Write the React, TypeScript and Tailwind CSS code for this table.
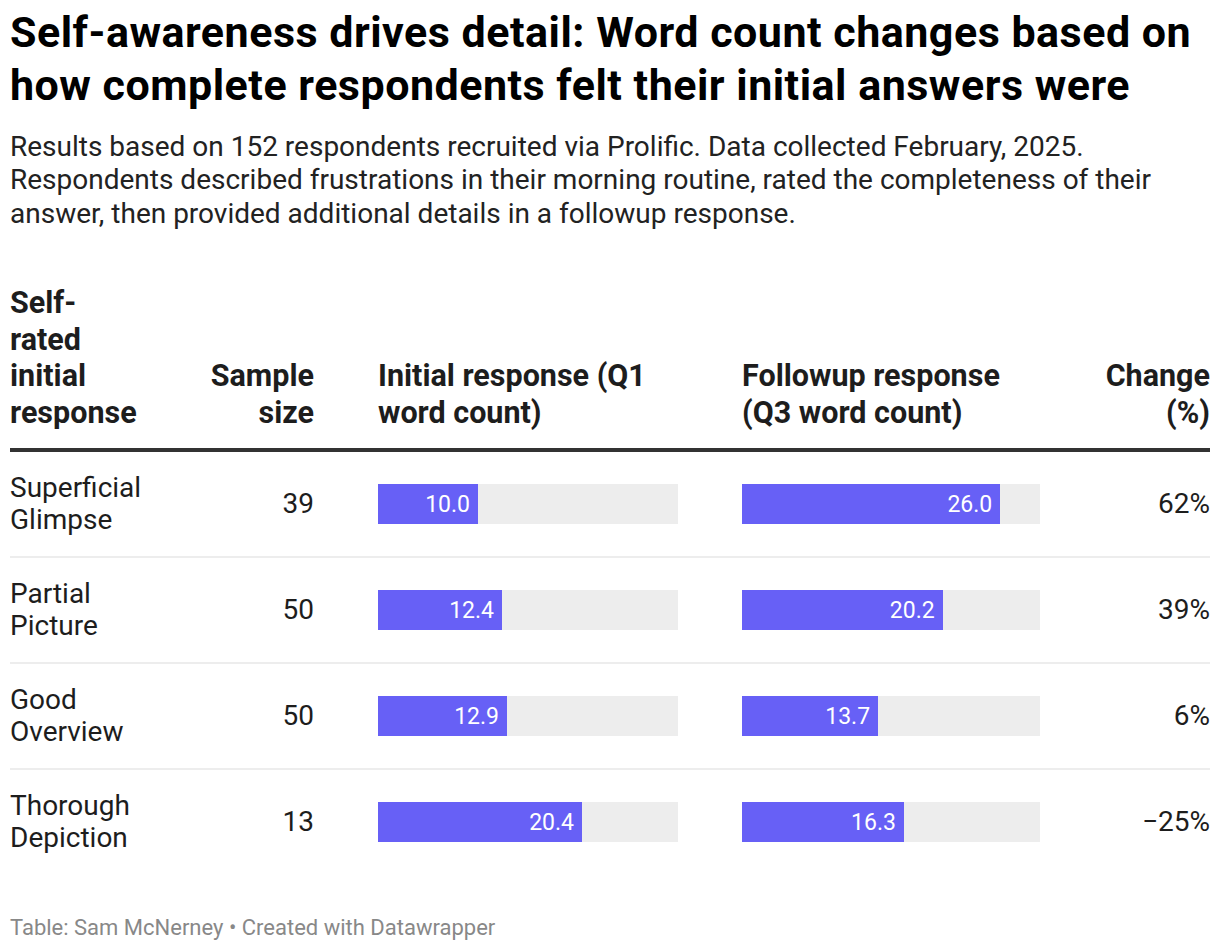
import React from 'react'

interface Row {
  label: [string, string]
  sample: number
  initial: number
  followup: number
  change: string
}

const rows: Row[] = [
  { label: ['Superficial', 'Glimpse'], sample: 39, initial: 10.0, followup: 26.0, change: '62%' },
  { label: ['Partial', 'Picture'], sample: 50, initial: 12.4, followup: 20.2, change: '39%' },
  { label: ['Good', 'Overview'], sample: 50, initial: 12.9, followup: 13.7, change: '6%' },
  { label: ['Thorough', 'Depiction'], sample: 13, initial: 20.4, followup: 16.3, change: '\u221225%' },
]

const MAX = 30

function Bar({ value, width }: { value: number; width: string }) {
  return (
    <div className={`h-[40px] bg-[#ededed] flex ${width}`}>
      <div
        className="h-full bg-[#6760f6] flex items-center justify-end pr-[8px] text-white text-[23px] leading-none"
        style={{ width: `${(value / MAX) * 100}%` }}
      >
        {value.toFixed(1)}
      </div>
    </div>
  )
}

export default function App() {
  return (
    <div
      className="w-[1220px] h-[950px] bg-white px-[10px] pt-[5.5px] text-[#1d1d1d]"
      style={{ fontFamily: 'Roboto, "Liberation Sans", sans-serif' }}
    >
      <h1 className="text-[43px] leading-[53px] font-bold text-black tracking-[0.5px]">
        Self-awareness drives detail: Word count changes based on how complete respondents felt their initial answers were
      </h1>
      <p className="mt-[18px] text-[28px] leading-[33.5px] text-[#222]">
        Results based on 152 respondents recruited via Prolific. Data collected February, 2025.
        <br />
        Respondents described frustrations in their morning routine, rated the completeness of their answer, then provided additional details in a followup response.
      </p>

      {/* table */}
      <div className="mt-[55px]">
        <div className="grid grid-cols-[180px_124px_364px_362px_170px] items-end border-b-4 border-[#333] pb-[17px] text-[30.5px] leading-[36.5px] font-bold">
          <div>
            Self-
            <br />
            rated
            <br />
            initial
            <br />
            response
          </div>
          <div className="text-right">
            Sample
            <br />
            size
          </div>
          <div className="pl-[64px]">
            Initial response (Q1
            <br />
            word count)
          </div>
          <div className="pl-[64px]">
            Followup response
            <br />
            (Q3 word count)
          </div>
          <div className="text-right">
            Change
            <br />
            (%)
          </div>
        </div>

        {rows.map((r, i) => (
          <div
            key={r.label[0]}
            className={`grid grid-cols-[180px_124px_364px_362px_170px] items-center py-[20px] text-[28px] leading-[32px] ${
              i < rows.length - 1 ? 'border-b-2 border-[#ededed]' : ''
            }`}
          >
            <div>
              {r.label[0]}
              <br />
              {r.label[1]}
            </div>
            <div className="text-right">{r.sample}</div>
            <div className="pl-[64px]">
              <Bar value={r.initial} width="w-[300px]" />
            </div>
            <div className="pl-[64px]">
              <Bar value={r.followup} width="w-[298px]" />
            </div>
            <div className="text-right">{r.change}</div>
          </div>
        ))}
      </div>

      <div className="mt-[40px] text-[22px] leading-[28px] text-[#888]">
        Table: Sam McNerney • Created with Datawrapper
      </div>
    </div>
  )
}
